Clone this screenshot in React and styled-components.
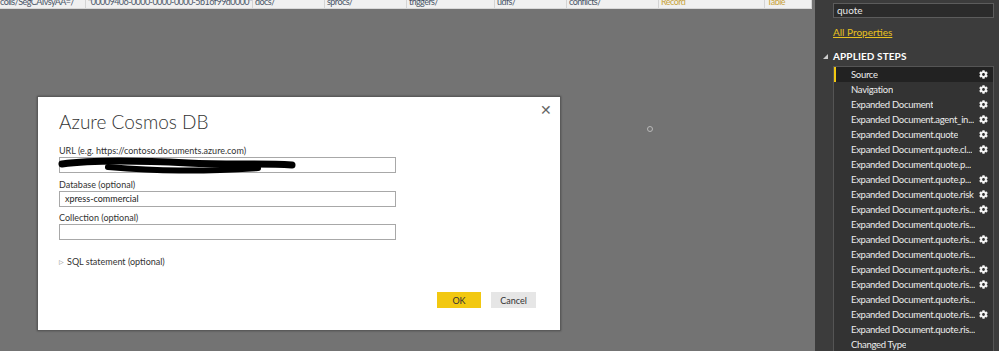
import React from 'react'
import styled, { createGlobalStyle } from 'styled-components'
import { FaCog } from 'react-icons/fa'

const GlobalStyle = createGlobalStyle`
    html, body {
        margin: 0;
        padding: 0;
        background: #737373;
        overflow: hidden;
    }
    * { box-sizing: border-box; }
`

const Screen = styled.div`
    width: 999px;
    height: 351px;
    display: flex;
    overflow: hidden;
    font-family: Lato, "Liberation Sans", sans-serif;
`
const Main = styled.div`
    position: relative;
    width: 815px;
    display: flex;
    flex-direction: column;
    background: #737373;
`
const TableRow = styled.div`
    width: 812px;
    height: 9px;
    display: flex;
    background: #f0f0f0;
    border-bottom: 1px solid #d8d8d8;
    overflow: hidden;
`
const Cell = styled.div`
    width: ${p => p.w}px;
    flex-shrink: 0;
    padding-left: ${p => (p.first ? 0 : 2)}px;
    border-right: 1px solid #d4d4d4;
    overflow: hidden;
    white-space: nowrap;
    font-size: 9px;
    letter-spacing: -0.55px;
    line-height: 11px;
    color: ${p => (p.link ? '#c9a43c' : '#4a5668')};
    span {
        display: block;
        margin-top: -4px;
    }
`
const Canvas = styled.div`
    flex: 1;
    padding: 87px 0 0 37px;
`
const Dialog = styled.div`
    width: 524px;
    height: 235px;
    background: #fff;
    border: 1px solid #5a5a5a;
    box-shadow: 0 0 2px rgba(0, 0, 0, 0.35);
    padding: 14px 22px 0 21px;
    display: flex;
    flex-direction: column;
    color: #333;
    position: relative;
`
const Close = styled.div`
    position: absolute;
    top: 4px;
    right: 8px;
    font-size: 14px;
    color: #666;
    font-weight: 300;
`
const Title = styled.h1`
    margin: 0 0 12px;
    font-family: Lato, "Liberation Sans", sans-serif;
    font-weight: 300;
    font-size: 19px;
    line-height: 22px;
    color: #333;
`
const Label = styled.div`
    font-size: 9px;
    line-height: 11px;
    color: #333;
    margin-bottom: 1px;
`
const Field = styled.div`
    position: relative;
    width: 337px;
    height: 16px;
    border: 1px solid #a8a8a8;
    font-size: 9px;
    line-height: 14px;
    padding-left: 5px;
    color: #222;
    margin-bottom: ${p => p.gap}px;
`
const Scribble = styled.svg`
    position: absolute;
    left: -2px;
    top: -2px;
`
const Toggle = styled.div`
    margin-top: 16px;
    display: flex;
    align-items: center;
    gap: 3px;
    font-size: 9px;
    color: #333;
`
const Caret = styled.span`
    font-size: 6px;
    color: #777;
`
const Buttons = styled.div`
    margin-top: 25px;
    align-self: flex-end;
    display: flex;
    gap: 10px;
    margin-right: 2px;
`
const Button = styled.div`
    width: ${p => p.w}px;
    height: 16px;
    display: flex;
    align-items: center;
    justify-content: center;
    font-size: 9px;
    color: #333;
    background: ${p => (p.primary ? '#f2c811' : '#e6e6e6')};
`
const Ring = styled.div`
    position: absolute;
    left: 647px;
    top: 126px;
    width: 6px;
    height: 6px;
    border-radius: 50%;
    border: 1px solid #b8b8b8;
`
const Panel = styled.div`
    width: 184px;
    background: #3c3c3c;
    padding: 3px 5px 0 8px;
    display: flex;
    flex-direction: column;
    color: #eee;
`
const Search = styled.div`
    margin-left: 10px;
    height: 15px;
    border: 1px solid #5c5c5c;
    background: #2b2b2b;
    font-size: 10px;
    line-height: 13px;
    padding-left: 3px;
    color: #e8e8e8;
`
const PropLink = styled.a`
    margin: 8px 0 0 10px;
    font-size: 10px;
    color: #e8c220;
    text-decoration: underline;
`
const Header = styled.div`
    margin-top: 12px;
    display: flex;
    align-items: center;
    gap: 5px;
    font-size: 10px;
    font-weight: 700;
    color: #fff;
    letter-spacing: 0.1px;
`
const Tri = styled.span`
    width: 0;
    height: 0;
    border-left: 5px solid transparent;
    border-bottom: 5px solid #ccc;
`
const Steps = styled.ul`
    list-style: none;
    margin: 4px 0 0 10px;
    padding: 0;
    flex: 1;
    border: 1px solid #555;
    border-bottom: none;
    background: #333;
`
const Step = styled.li`
    height: 15px;
    display: flex;
    align-items: center;
    justify-content: space-between;
    padding: 0 5px 0 15px;
    font-size: 9.5px;
    letter-spacing: -0.3px;
    color: #ececec;
    white-space: nowrap;
    background: ${p => (p.active ? '#222' : 'transparent')};
    border-left: 2px solid ${p => (p.active ? '#f2c811' : 'transparent')};
    span {
        overflow: hidden;
        min-width: 0;
    }
    svg {
        flex-shrink: 0;
        font-size: 9px;
        color: #f4f4f4;
    }
`

const cells = [
  { w: 86, t: 'colls/SegCAIvsyAA=/', first: true },
  { w: 167, t: '"00009406-0000-0000-0000-5b16f99d0000"' },
  { w: 72, t: 'docs/' },
  { w: 82, t: 'sprocs/' },
  { w: 88, t: 'triggers/' },
  { w: 72, t: 'udfs/' },
  { w: 92, t: 'conflicts/' },
  { w: 106, t: 'Record', link: true },
  { w: 47, t: 'Table', link: true },
]

const steps = [
  ['Source', true],
  ['Navigation', true],
  ['Expanded Document', true],
  ['Expanded Document.agent_in...', true],
  ['Expanded Document.quote', true],
  ['Expanded Document.quote.cl...', true],
  ['Expanded Document.quote.p...', false],
  ['Expanded Document.quote.p...', true],
  ['Expanded Document.quote.risk', true],
  ['Expanded Document.quote.ris...', true],
  ['Expanded Document.quote.ris...', false],
  ['Expanded Document.quote.ris...', true],
  ['Expanded Document.quote.ris...', false],
  ['Expanded Document.quote.ris...', true],
  ['Expanded Document.quote.ris...', true],
  ['Expanded Document.quote.ris...', false],
  ['Expanded Document.quote.ris...', true],
  ['Expanded Document.quote.ris...', false],
  ['Changed Type', false],
]

const App = () => {
  return (
    <>
      <GlobalStyle />
      <Screen>
        <Main>
          <TableRow>
            {cells.map((c, i) => (
              <Cell key={i} w={c.w} first={c.first} link={c.link}>
                <span>{c.t}</span>
              </Cell>
            ))}
          </TableRow>
          <Canvas>
            <Dialog>
              <Close>✕</Close>
              <Title>Azure Cosmos DB</Title>
              <Label>URL (e.g. https://contoso.documents.azure.com)</Label>
              <Field gap={6}>
                <Scribble width="240" height="20" viewBox="0 0 240 20">
                  <path d="M4 8 C 40 3, 90 5, 130 7 C 170 9, 200 7, 234 9" stroke="#000" strokeWidth="7" fill="none" strokeLinecap="round" />
                  <path d="M50 11 C 100 15, 140 16, 200 12" stroke="#000" strokeWidth="6" fill="none" strokeLinecap="round" />
                </Scribble>
              </Field>
              <Label>Database (optional)</Label>
              <Field gap={5}>xpress-commercial</Field>
              <Label>Collection (optional)</Label>
              <Field gap={0} />
              <Toggle>
                <Caret>▷</Caret>
                SQL statement (optional)
              </Toggle>
              <Buttons>
                <Button primary w={44}>OK</Button>
                <Button w={45}>Cancel</Button>
              </Buttons>
            </Dialog>
          </Canvas>
          <Ring />
        </Main>
        <Panel>
          <Search>quote</Search>
          <PropLink>All Properties</PropLink>
          <Header>
            <Tri />
            APPLIED STEPS
          </Header>
          <Steps>
            {steps.map(([name, gear], i) => (
              <Step key={i} active={i === 0}>
                <span>{name}</span>
                {gear && <FaCog />}
              </Step>
            ))}
          </Steps>
        </Panel>
      </Screen>
    </>
  )
}

export default App
